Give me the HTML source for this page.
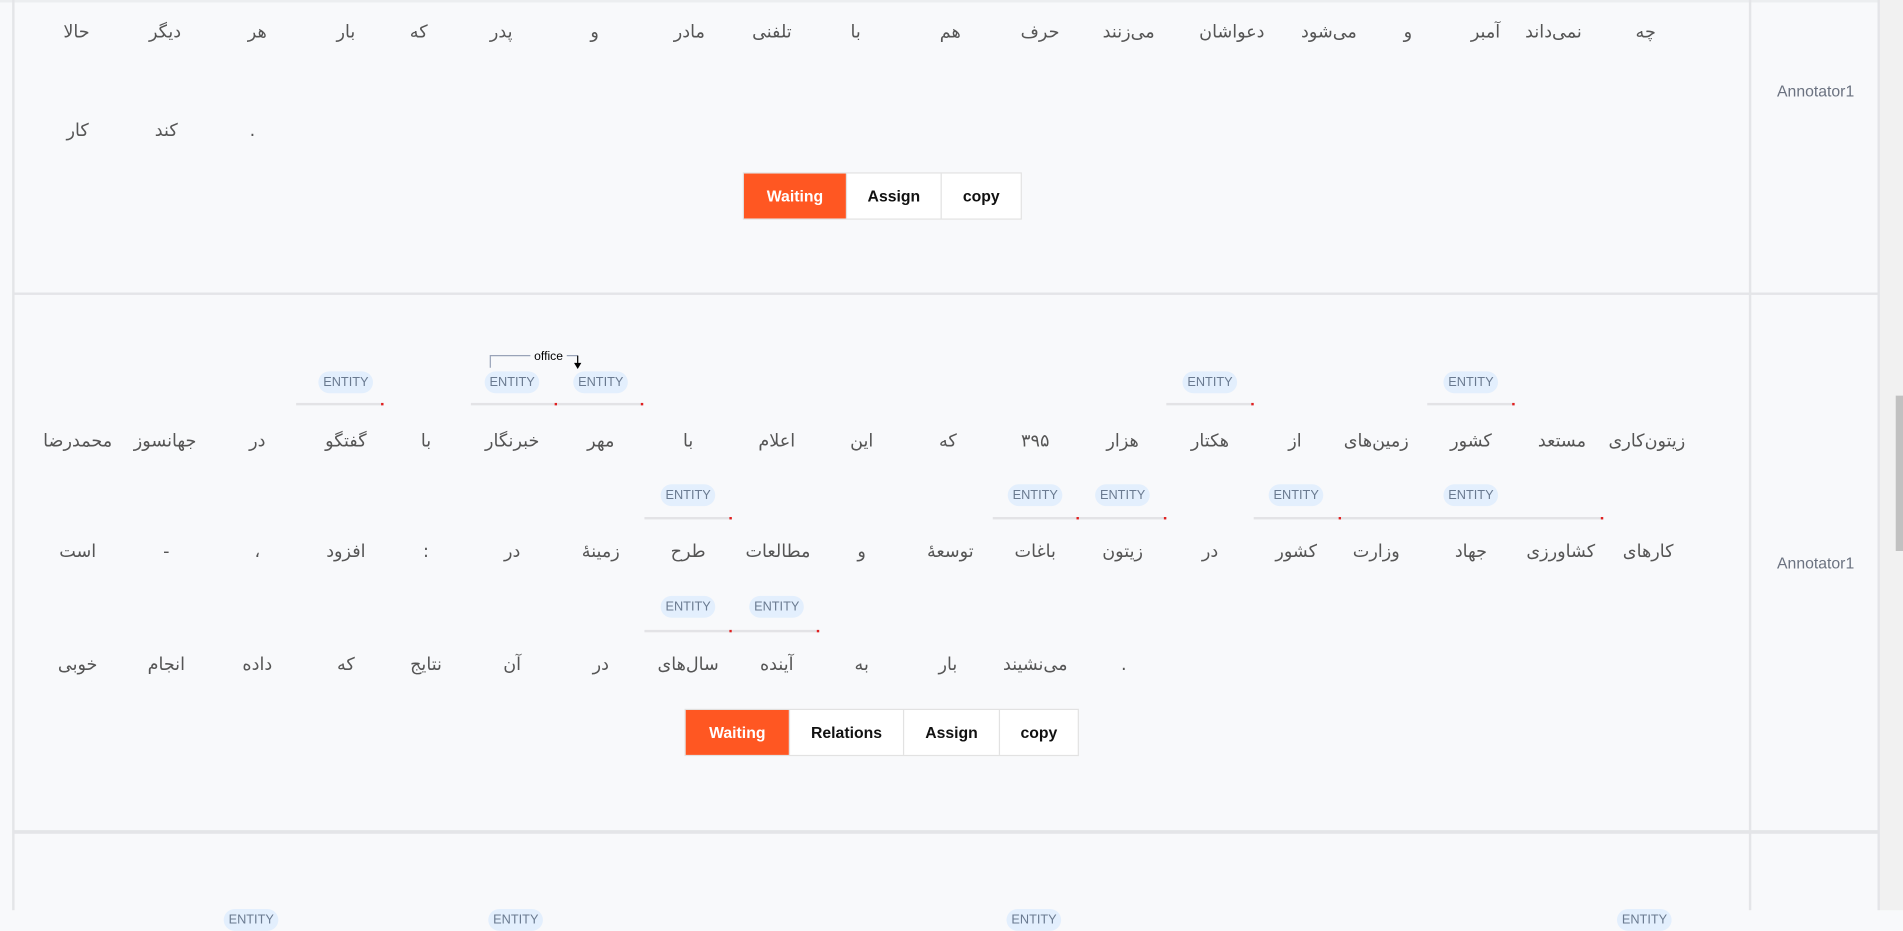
<!DOCTYPE html>
<html><head><meta charset="utf-8"><style>
html,body{margin:0;padding:0;width:1903px;height:910px;overflow:hidden;background:#f8f9fb}
#s{position:absolute;left:0;top:0;width:1568px;height:750px;transform:scale(1.21365);transform-origin:0 0;background:#f8f9fb;font-family:"Liberation Sans","Noto Sans CJK SC",sans-serif}
.w{position:absolute;transform:translate(-50%,-50%);color:#555;white-space:nowrap;font-family:"DejaVu Sans","Noto Sans CJK SC",sans-serif;font-size:14.5px}
.e{position:absolute;transform:translate(-50%,-50%);font-size:10.5px;color:#6a7a90;background:#e3effd;border-radius:10px;padding:3px 4px;line-height:12px}
.l{position:absolute;height:2px;background:#e3e3e6}
.l:after{content:"";position:absolute;right:0;top:0;width:2px;height:2px;background:#e02020}
.vl{position:absolute;background:#e4e5e8}
.btns{position:absolute;display:flex;height:37px;border:1px solid #e2e2e2;background:#fff}
.btns div{display:flex;align-items:center;justify-content:center;font-weight:bold;font-size:13px;color:#111;border-left:1px solid #e2e2e2}
.btns div.o{background:#ff5722;color:#fff;border-left:none}
.an{position:absolute;transform:translate(-50%,-50%);font-size:13px;color:#6b7280}
</style></head><body><div id="s">
<div class="vl" style="left:0;top:0;width:1568px;height:2px;background:#eceef0"></div>
<div class="vl" style="left:10px;top:0;width:2px;height:750px"></div>
<div class="vl" style="left:1441px;top:0;width:2px;height:750px"></div>
<div class="vl" style="left:1547px;top:0;width:2px;height:750px"></div>
<div class="vl" style="left:1549px;top:0;width:19px;height:750px;background:#f1f1f1"></div>
<div class="vl" style="left:1562px;top:326px;width:6px;height:128px;background:#c1c1c1"></div>
<div class="vl" style="left:11px;top:241px;width:1536px;height:2px"></div>
<div class="vl" style="left:11px;top:684px;width:1536px;height:3px"></div>

<span class="w" style="left:1356px;top:27px">چه</span><span class="w" style="left:1280px;top:27px">نمی‌داند</span><span class="w" style="left:1224px;top:27px">آمبر</span><span class="w" style="left:1160px;top:27px">و</span><span class="w" style="left:1095px;top:27px">می‌شود</span><span class="w" style="left:1015px;top:27px">دعواشان</span><span class="w" style="left:930px;top:27px">می‌زنند</span><span class="w" style="left:857px;top:27px">حرف</span><span class="w" style="left:783px;top:27px">هم</span><span class="w" style="left:705px;top:27px">با</span><span class="w" style="left:636px;top:27px">تلفنی</span><span class="w" style="left:568px;top:27px">مادر</span><span class="w" style="left:490px;top:27px">و</span><span class="w" style="left:413px;top:27px">پدر</span><span class="w" style="left:345px;top:27px">که</span><span class="w" style="left:285px;top:27px">بار</span><span class="w" style="left:212px;top:27px">هر</span><span class="w" style="left:136px;top:27px">دیگر</span><span class="w" style="left:63px;top:27px">حالا</span>
<span class="w" style="left:64px;top:108px">کار</span><span class="w" style="left:137px;top:108px">کند</span><span class="w" style="left:208px;top:108px">.</span>
<div class="btns" style="left:612px;top:142px"><div class="o" style="width:84px">Waiting</div><div style="width:77px">Assign</div><div style="width:65px">copy</div></div>
<span class="an" style="left:1496px;top:75px">Annotator1</span>

<span class="w" style="left:1357px;top:364px">زیتون‌کاری</span><span class="w" style="left:1287px;top:364px">مستعد</span><span class="w" style="left:1212px;top:364px">کشور</span><span class="w" style="left:1134px;top:364px">زمین‌های</span><span class="w" style="left:1067px;top:364px">از</span><span class="w" style="left:997px;top:364px">هکتار</span><span class="w" style="left:925px;top:364px">هزار</span><span class="w" style="left:853px;top:364px">۳۹۵</span><span class="w" style="left:781px;top:364px">که</span><span class="w" style="left:710px;top:364px">این</span><span class="w" style="left:640px;top:364px">اعلام</span><span class="w" style="left:567px;top:364px">با</span><span class="w" style="left:495px;top:364px">مهر</span><span class="w" style="left:422px;top:364px">خبرنگار</span><span class="w" style="left:351px;top:364px">با</span><span class="w" style="left:285px;top:364px">گفتگو</span><span class="w" style="left:212px;top:364px">در</span><span class="w" style="left:136px;top:364px">جهانسوز</span><span class="w" style="left:64px;top:364px">محمدرضا</span>
<span class="e" style="left:285px;top:315px">ENTITY</span><div class="l" style="left:244px;top:332px;width:72px"></div>
<span class="e" style="left:422px;top:315px">ENTITY</span><div class="l" style="left:388px;top:332px;width:71px"></div>
<span class="e" style="left:495px;top:315px">ENTITY</span><div class="l" style="left:459px;top:332px;width:71px"></div>
<span class="e" style="left:997px;top:315px">ENTITY</span><div class="l" style="left:961px;top:332px;width:72px"></div>
<span class="e" style="left:1212px;top:315px">ENTITY</span><div class="l" style="left:1176px;top:332px;width:72px"></div>
<svg style="position:absolute;left:400px;top:286px" width="90" height="22"><path d="M4 17V7H76" stroke="#99a3b8" fill="none" stroke-width="1"/><path d="M76 7V15" stroke="#000" stroke-width="1"/><path d="M73 13L76 18L79 13Z" fill="#000"/><rect x="37" y="1" width="30" height="11" fill="#f8f9fb"/><text x="52" y="10.5" font-size="10" text-anchor="middle" font-family="Liberation Sans,sans-serif">office</text></svg>

<span class="w" style="left:1358px;top:455px">کارهای</span><span class="w" style="left:1286px;top:455px">کشاورزی</span><span class="w" style="left:1212px;top:455px">جهاد</span><span class="w" style="left:1134px;top:455px">وزارت</span><span class="w" style="left:1068px;top:455px">کشور</span><span class="w" style="left:997px;top:455px">در</span><span class="w" style="left:925px;top:455px">زیتون</span><span class="w" style="left:853px;top:455px">باغات</span><span class="w" style="left:783px;top:455px">توسعهٔ</span><span class="w" style="left:710px;top:455px">و</span><span class="w" style="left:641px;top:455px">مطالعات</span><span class="w" style="left:567px;top:455px">طرح</span><span class="w" style="left:495px;top:455px">زمینهٔ</span><span class="w" style="left:422px;top:455px">در</span><span class="w" style="left:351px;top:455px">:</span><span class="w" style="left:285px;top:455px">افزود</span><span class="w" style="left:212px;top:455px">،</span><span class="w" style="left:137px;top:455px">-</span><span class="w" style="left:64px;top:455px">است</span>
<span class="e" style="left:1068px;top:408px">ENTITY</span><div class="l" style="left:1033px;top:426px;width:72px"></div>
<span class="e" style="left:1212px;top:408px">ENTITY</span><div class="l" style="left:1105px;top:426px;width:216px"></div>
<span class="e" style="left:853px;top:408px">ENTITY</span><div class="l" style="left:818px;top:426px;width:71px"></div>
<span class="e" style="left:925px;top:408px">ENTITY</span><div class="l" style="left:889px;top:426px;width:72px"></div>
<span class="e" style="left:567px;top:408px">ENTITY</span><div class="l" style="left:531px;top:426px;width:72px"></div>

<span class="w" style="left:926px;top:548px">.</span><span class="w" style="left:853px;top:548px">می‌نشیند</span><span class="w" style="left:781px;top:548px">بار</span><span class="w" style="left:710px;top:548px">به</span><span class="w" style="left:640px;top:548px">آینده</span><span class="w" style="left:567px;top:548px">سال‌های</span><span class="w" style="left:495px;top:548px">در</span><span class="w" style="left:422px;top:548px">آن</span><span class="w" style="left:351px;top:548px">نتایج</span><span class="w" style="left:285px;top:548px">که</span><span class="w" style="left:212px;top:548px">داده</span><span class="w" style="left:137px;top:548px">انجام</span><span class="w" style="left:64px;top:548px">خوبی</span>
<span class="e" style="left:567px;top:500px">ENTITY</span><div class="l" style="left:531px;top:519px;width:72px"></div>
<span class="e" style="left:640px;top:500px">ENTITY</span><div class="l" style="left:603px;top:519px;width:72px"></div>
<div class="btns" style="left:564px;top:584px"><div class="o" style="width:85px">Waiting</div><div style="width:93px">Relations</div><div style="width:78px">Assign</div><div style="width:64px">copy</div></div>
<span class="an" style="left:1496px;top:464px">Annotator1</span>

<span class="e" style="left:207px;top:758px">ENTITY</span><span class="e" style="left:425px;top:758px">ENTITY</span><span class="e" style="left:852px;top:758px">ENTITY</span><span class="e" style="left:1355px;top:758px">ENTITY</span>
</div></body></html>
